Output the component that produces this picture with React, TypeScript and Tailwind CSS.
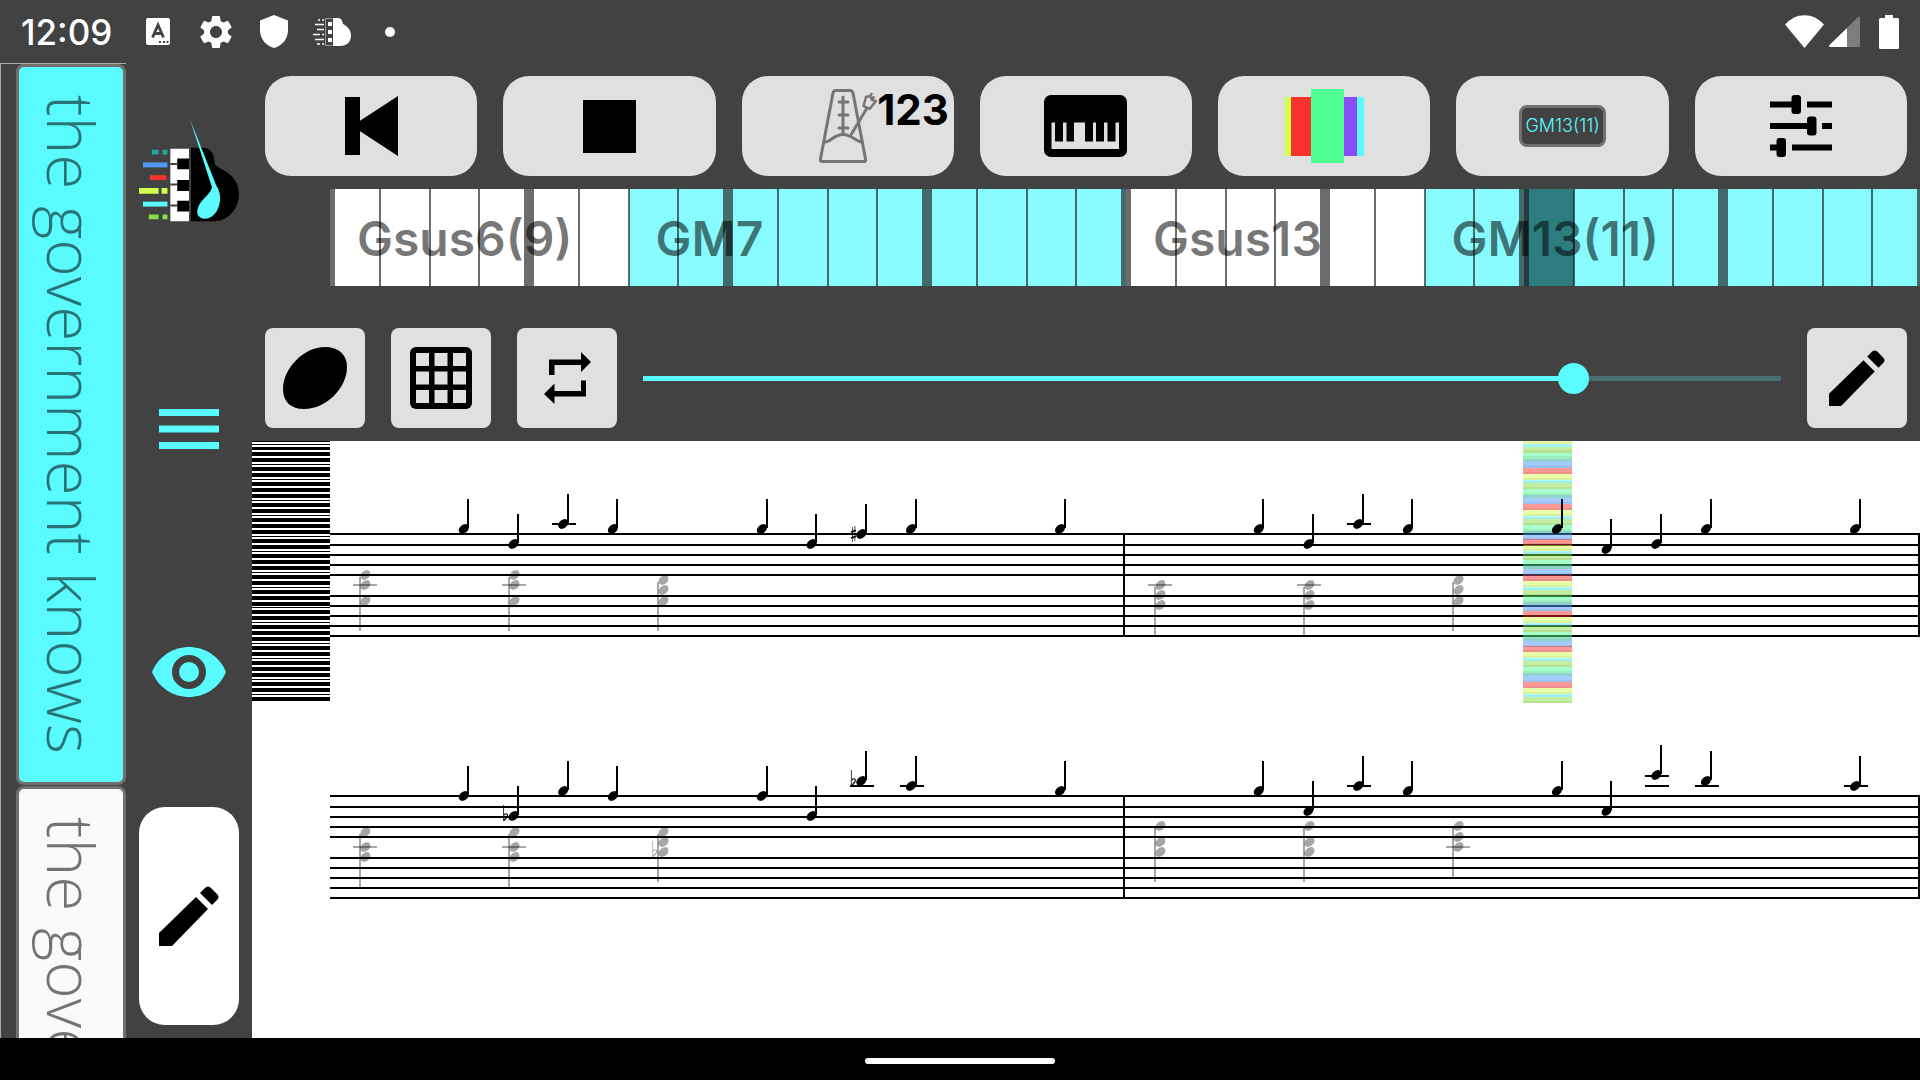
import React from "react";
import { MdSettings } from "react-icons/md";

const STEP = 795 / 16;
const noteX = (k: number) => 365 + STEP * k;

type Note = { k: number; y: number; ledgers?: number[]; accidental?: "sharp" | "flat" };
type Chord = { k: number; heads: number[]; ledger?: number; flat?: number };

const melody: Note[] = [
  { k: 2, y: 529 }, { k: 3, y: 544 }, { k: 4, y: 524, ledgers: [524] }, { k: 5, y: 529 },
  { k: 8, y: 529 }, { k: 9, y: 544 }, { k: 10, y: 534, accidental: "sharp" }, { k: 11, y: 529 }, { k: 14, y: 529 },
  { k: 18, y: 529 }, { k: 19, y: 544 }, { k: 20, y: 524, ledgers: [524] }, { k: 21, y: 529 },
  { k: 24, y: 529 }, { k: 25, y: 549 }, { k: 26, y: 544 }, { k: 27, y: 529 }, { k: 30, y: 529 },
  { k: 2, y: 796 }, { k: 3, y: 816, accidental: "flat" }, { k: 4, y: 791 }, { k: 5, y: 796 },
  { k: 8, y: 796 }, { k: 9, y: 816 }, { k: 10, y: 781, ledgers: [786], accidental: "flat" },
  { k: 11, y: 786, ledgers: [786] }, { k: 14, y: 791 },
  { k: 18, y: 791 }, { k: 19, y: 811 }, { k: 20, y: 786, ledgers: [786] }, { k: 21, y: 791 },
  { k: 24, y: 791 }, { k: 25, y: 811 }, { k: 26, y: 775, ledgers: [776, 786] },
  { k: 27, y: 781, ledgers: [786] }, { k: 30, y: 786, ledgers: [786] },
];

const harmony: Chord[] = [
  { k: 0, heads: [575, 585, 601], ledger: 585 },
  { k: 3, heads: [575, 585, 601], ledger: 585 },
  { k: 6, heads: [580, 590, 601] },
  { k: 16, heads: [585, 595, 605], ledger: 585 },
  { k: 19, heads: [585, 595, 605], ledger: 585 },
  { k: 22, heads: [580, 590, 601] },
  { k: 0, heads: [832, 847, 857], ledger: 847 },
  { k: 3, heads: [832, 847, 857], ledger: 847 },
  { k: 6, heads: [832, 842, 852], flat: 852 },
  { k: 16, heads: [826, 842, 852] },
  { k: 19, heads: [826, 842, 852] },
  { k: 22, heads: [826, 837, 847], ledger: 847 },
];

const staffLines = [534, 545, 555, 565, 575, 596, 606, 616, 626, 636];

const octaveKeys: [number, number][] = [[0, 1], [3, 4], [9, 4], [15, 1], [18, 4], [24, 4], [30, 4]];
const keyBars: [number, number][] = [
  [441, 1], [444, 1], [447, 3], [452, 4], [458, 4],
  ...[464, 500, 536, 572, 607, 643, 679].flatMap((top) =>
    octaveKeys.map(([dy, h]): [number, number] => [top + dy, h])
  ).filter(([y]) => y < 700),
];

const octaveStripes: [number, string, boolean][] = [
  [3, "#fa322d", false], [3, "#fa322d", true],
  [3, "#d0ff50", false], [3, "#d0ff50", true],
  [3, "#5afbff", true],
  [3, "#86e040", false], [3, "#86e040", true],
  [3, "#50ff94", false], [3, "#50ff94", true],
  [3, "#26a69a", false],
  [3, "#5099ff", false], [3, "#5099ff", true],
];

function Head({ x, y }: { x: number; y: number }) {
  return <ellipse cx={x} cy={y} rx={5.6} ry={4.2} transform={`rotate(-42 ${x} ${y})`} />;
}

function Flat({ x, y }: { x: number; y: number }) {
  return (
    <g fill="none" stroke="black">
      <path d={`M${x - 10.5} ${y - 11}V${y + 5}`} strokeWidth={0.8} />
      <path d={`M${x - 10} ${y - 1}C${x - 7} ${y - 4} ${x - 6} ${y - 1} ${x - 7} ${y + 1}L${x - 10} ${y + 4.5}`} strokeWidth={1.2} />
    </g>
  );
}

function Sharp({ x, y }: { x: number; y: number }) {
  return (
    <g stroke="black">
      <path d={`M${x - 9.3} ${y - 7}V${y + 8}M${x - 7} ${y - 8}V${y + 7}`} strokeWidth={0.7} />
      <path d={`M${x - 11} ${y - 2}l5 -1.6M${x - 11} ${y + 4}l5 -1.6`} strokeWidth={1.8} />
    </g>
  );
}

function Score() {
  return (
    <svg className="block w-full" viewBox="252 441 1668 597" preserveAspectRatio="xMinYMin meet" role="img" aria-label="Sheet music">
      {keyBars.map(([y, h]) => (
        <rect key={y} x={252} y={y} width={78} height={h} shapeRendering="crispEdges" />
      ))}
      {[0, 262].map((dy) => (
        <g key={dy} shapeRendering="crispEdges">
          {staffLines.map((y) => (
            <rect key={y} x={330} y={y + dy - 1} width={1590} height={2} />
          ))}
          <rect x={1123} y={533 + dy} width={2} height={104} />
          <rect x={1918} y={533 + dy} width={2} height={104} />
        </g>
      ))}
      <g shapeRendering="crispEdges">
        <g opacity={0.5}>
          <rect x={1523} y={441} width={49} height={3} fill="#d0ff50" />
          <rect x={1523} y={444} width={49} height={3} fill="#5afbff" />
          <rect x={1523} y={447} width={49} height={6} fill="#86e040" />
          <rect x={1523} y={453} width={49} height={6} fill="#50ff94" />
          <rect x={1523} y={459} width={49} height={3} fill="#26a69a" />
          <rect x={1523} y={462} width={49} height={6} fill="#5099ff" />
        </g>
        <g fill="black" opacity={0.06}>
          <rect x={1523} y={442} width={49} height={1} />
          <rect x={1523} y={445} width={49} height={1} />
          <rect x={1523} y={450} width={49} height={3} />
          <rect x={1523} y={456} width={49} height={3} />
          <rect x={1523} y={465} width={49} height={3} />
        </g>
        {[468, 504, 539, 575, 611, 646, 682].map((top) =>
          octaveStripes.map(([h, fill, dark], i) => {
            const y = top + i * 3;
            if (y >= 703) return null;
            return (
              <g key={y}>
                <rect x={1523} y={y} width={49} height={h} fill={fill} opacity={0.5} />
                {dark && <rect x={1523} y={y + 1} width={49} height={2} opacity={0.06} />}
              </g>
            );
          })
        )}
      </g>
      {melody.map((n) => {
        const x = noteX(n.k);
        return (
          <g key={`${n.k}-${n.y}`}>
            <Head x={x - 0.6} y={n.y} />
            <rect x={Math.round(x + 3)} y={n.y - 30} width={2} height={29} />
            {n.ledgers?.map((l) => (
              <rect key={l} x={Math.round(x) - 12} y={l - 1} width={24} height={2} />
            ))}
            {n.accidental === "flat" && <Flat x={x} y={n.y} />}
            {n.accidental === "sharp" && <Sharp x={x} y={n.y} />}
          </g>
        );
      })}
      {harmony.map((c) => {
        const x = noteX(c.k);
        const low = c.heads[c.heads.length - 1];
        return (
          <g key={`${c.k}-${low}-${c.heads[0]}`}>
            <g fillOpacity={0.35}>
              {c.heads.map((y) => <Head key={y} x={x + 0.4} y={y} />)}
              <rect x={Math.round(x) - 6} y={c.heads[0] + 2} width={2} height={low + 28 - c.heads[0]} />
              {c.ledger && <rect x={Math.round(x) - 12} y={c.ledger - 1} width={24} height={2} />}
            </g>
            {c.flat && <g opacity={0.35}><Flat x={x} y={c.flat} /></g>}
          </g>
        );
      })}
    </svg>
  );
}

function Pencil({ className }: { className: string }) {
  return (
    <svg className={className} viewBox="0 0 60 60">
      <path d="M0 47L37 11L49 23L13 60H0Z" />
      <path d="M41 7L46 2Q49 -1 52 2L58 8Q61 11 58 14L53 19Z" />
    </svg>
  );
}

function Logo() {
  return (
    <svg className="h-[134px] w-[102px]" viewBox="138 118 102 134">
      <path fill="#26a69a" d="M151 149h7v5h-7zM162 149h5v5h-5z" />
      <path fill="#5099ff" d="M142 162h25v5h-25z" />
      <path fill="#fa322d" d="M149 175h17v5h-17z" />
      <path fill="#d0ff50" d="M138 188h20v6h-20zM161 188h6v6h-6z" />
      <path fill="#5afbff" d="M142 202h25v5h-25z" />
      <path fill="#86e040" d="M148 215h10v5h-10zM162 215h5v5h-5z" />
      <path fill="white" d="M170 148h19v74h-19z" />
      <path d="M177 158h12v11h-12zM177 180h12v11h-12zM177 201h12v11h-12z" />
      <path stroke="#424242" strokeWidth="2" d="M170 163.5h7M170 184.500h7M170 206h7" />
      <path d="M191 147H203C211 147 215 154 215 161C215 167 223 168 229 173C237 179 240 187 240 194C240 210 228 222 215 222H191Z" />
      <path fill="#5afbff" d="M190 118L217 186C221 191 222 201 219 208C217 214 211 220 205 219.500C199 219 196 215 198 209C200 200 210 196 212.500 187.500Z" />
    </svg>
  );
}

function StatusBar() {
  return (
    <header className="flex h-[63px] shrink-0 items-center justify-between pl-[21px] pr-[21px] text-white">
      <div className="flex items-center">
        <time className="w-[91px] text-[35px] leading-[44px] font-medium">12:09</time>
        <svg className="ml-[34px] h-[27px] w-[24px]" viewBox="0 0 24 27">
          <rect width="24" height="27" rx="2" fill="white" />
          <path fill="none" stroke="#424242" strokeWidth="2.800" d="M6.500 19.500L12 7L17.500 19.500M8.500 15.500H15.500" />
          <path fill="#424242" d="M13 23h2v2h-2zM17 23h2v2h-2zM20.500 23h2v2h-2z" />
        </svg>
        <MdSettings className="ml-[26px] size-[40px]" />
        <svg className="ml-[24px] h-[33px] w-[28px]" viewBox="0 0 28 33">
          <path fill="white" d="M14 0L28 5.500V15C28 24 22 31 14 33C6 31 0 24 0 15V5.500Z" />
        </svg>
        <svg className="ml-[25px] h-[28px] w-[38px]" viewBox="0 0 38 28">
          <path fill="white" d="M20 0H25C29 0 29.500 4 30 6C34 8 38 12 38 17C38 24 34 28 27 28H20Z" />
          <path fill="white" d="M15 4h4v4h-4zM15 12h4v4h-4zM15 20h4v4h-4z" />
          <path stroke="#999" strokeWidth="1" fill="none" d="M12.500 0V28M12 .5H19M12 27.500H19" />
          <path stroke="white" strokeWidth="1.600" d="M5 2h2M9 2h2M2 6.500h9M4 11.500h7M0 16.500h7M9 16.500h2M2 21.500h9M4 26h3M9 26h2" />
        </svg>
        <span className="ml-[34px] size-[10px] rounded-full bg-white" />
      </div>
      <div className="flex items-center">
        <svg className="h-[33px] w-[39px]" viewBox="0 0 39 33">
          <path fill="white" d="M19.500 33L0 9.500C11 -3 28 -3 39 9.500Z" />
        </svg>
        <svg className="ml-[5px] h-[31px] w-[31px]" viewBox="0 0 31 31">
          <path fill="#7d7d7d" d="M18 12L29 1Q31 0 31 2V30L30 31H18Z" />
          <path fill="white" d="M18 12V31H1Q-1 30 1 28.500Z" />
        </svg>
        <svg className="ml-[19px] h-[34px] w-[20px]" viewBox="0 0 20 34">
          <path fill="white" d="M6 0H14V3H18.500Q20 3 20 4.500V32.500Q20 34 18.500 34H1.500Q0 34 0 32.500V4.500Q0 3 1.500 3H6Z" />
        </svg>
      </div>
    </header>
  );
}

function LyricCard({ active }: { active?: boolean }) {
  return (
    <li>
      <button
        className={
          "flex w-full items-center justify-center rounded-[8px] border-[3px] border-[#757070] py-[28px] " +
          (active ? "bg-[#5afbff]" : "bg-[#fafafa]")
        }
      >
        <span className="font-['Open_Sans'] text-[64px] leading-[82px] font-light whitespace-nowrap text-black/54 [writing-mode:vertical-rl]">
          the government knows
        </span>
      </button>
    </li>
  );
}

function ToolButton({ label, children }: { label: string; children: React.ReactNode }) {
  return (
    <button aria-label={label} className="relative flex h-[100px] flex-1 items-center justify-center rounded-[26px] bg-[#e0e0e0]">
      {children}
    </button>
  );
}

function SquareButton({ label, children }: { label: string; children: React.ReactNode }) {
  return (
    <button aria-label={label} className="flex size-[100px] shrink-0 items-center justify-center rounded-[8px] bg-[#e0e0e0]">
      {children}
    </button>
  );
}

function Toolbar() {
  return (
    <div className="flex gap-[26px] px-[13px] pt-[13px]">
      <ToolButton label="Rewind">
        <svg className="h-[60px] w-[53px]" viewBox="0 0 53 60">
          <path d="M0 1h15v58h-15zM7 30L53 0V60Z" />
        </svg>
      </ToolButton>
      <ToolButton label="Stop">
        <span className="h-[53px] w-[53px] bg-black" />
      </ToolButton>
      <ToolButton label="Metronome, 123 beats per minute">
        <svg className="h-[76px] w-[60px]" viewBox="819 88 60 76" fill="none" stroke="#757575" strokeWidth="3" strokeLinejoin="round" strokeLinecap="round">
          <path d="M837 90.500H851Q853 90.500 854 93L866.500 159Q867 161.500 865 161.500H823Q821 161.500 821.500 159L834 93Q834.500 90.500 837 90.500Z" />
          <path d="M844 97V134M840 102H849M840 115H849M840 128H849" />
          <path d="M826 142C832 142 835 134.500 844 134.500C853 134.500 857 142 863 142M852.500 134L868 108" />
          <path strokeWidth="2.500" d="M864.500 106L867 97L871 96L873 100L877 101L870.500 109ZM871 96L872.500 94M873 100L874.500 97" />
        </svg>
        <span className="absolute top-[8px] right-[5px] text-[42px] leading-[52px] font-bold">123</span>
      </ToolButton>
      <ToolButton label="Piano">
        <svg className="h-[62px] w-[83px]" viewBox="0 0 83 62">
          <rect width="83" height="62" rx="7" />
          <path fill="#e0e0e0" d="M7.500 27.500H11V46.500H19V27.500H22.500V46.500H30V27.500H41V46.500H49V27.500H52V46.500H60V27.500H63.500V46.500H71.500V27.500H75V54H7.500Z" />
        </svg>
      </ToolButton>
      <ToolButton label="Colors">
        <span className="flex items-center">
          <span className="h-[59px] w-[6px] bg-[#d0ff50]" />
          <span className="h-[59px] w-[20px] bg-[#fa322d]" />
          <span className="h-[74px] w-[33px] bg-[#50ff94]" />
          <span className="h-[59px] w-[13px] bg-[#8a4cf6]" />
          <span className="h-[59px] w-[7px] bg-[#5afbff]" />
        </span>
      </ToolButton>
      <ToolButton label="Current chord">
        <span className="flex h-[42px] w-[87px] items-center justify-center rounded-[8px] border-[3px] border-[#757070] bg-[#424242] text-[18px] leading-[24px] font-light text-[#5afbff]">
          GM13(11)
        </span>
      </ToolButton>
      <ToolButton label="Mixer">
        <svg className="size-[62px]" viewBox="0 0 62 62">
          <path d="M0 6.500h26v6h-26zM37 6.500h25v6h-25zM0 28h41v6h-41zM52 28h10v6h-10zM0 49.500h10v6h-10zM22 49.500h40v6h-40z" />
          <rect x="21.500" width="9.500" height="19" rx="3" />
          <rect x="37" y="21.500" width="9.500" height="19" rx="3" />
          <rect x="6.500" y="43" width="9.500" height="19" rx="3" />
        </svg>
      </ToolButton>
    </div>
  );
}

const segments = [
  { name: "Gsus6(9)", start: 0, count: 6, major: false },
  { name: "GM7", start: 6, count: 10, major: true },
  { name: "Gsus13", start: 16, count: 6, major: false },
  { name: "GM13(11)", start: 22, count: 10, major: true },
];

function ChordStrip() {
  return (
    <div className="mt-[13px] -mr-[2px] ml-[78px] flex h-[97px]">
      {segments.map((s) => (
        <div key={s.start} className={"grid min-w-0 basis-0 grid-cols-1 grid-rows-1 " + (s.major ? "grow-[10]" : "grow-[6]")}>
          <div className="col-start-1 row-start-1 grid auto-cols-fr grid-flow-col">
            {Array.from({ length: s.count }, (_, i) => {
              const k = s.start + i;
              const current = k === 24;
              return (
                <div
                  key={k}
                  className={[
                    k % 4 === 0 ? "border-l-[5px]" : "border-l",
                    k % 4 === 3 ? "border-r-[5px]" : "border-r",
                    current
                      ? "border-[#243c3c] bg-[#2c7c80]"
                      : s.major
                        ? "border-[#446b6b] bg-[#87fbff]"
                        : "border-[#6c6c6c] bg-white",
                  ].join(" ")}
                />
              );
            })}
          </div>
          <span className="col-start-1 row-start-1 self-center pt-[3px] pl-[27px] text-[48px] leading-[60px] font-semibold whitespace-nowrap text-black/54">
            {s.name}
          </span>
        </div>
      ))}
    </div>
  );
}

function Controls() {
  return (
    <div className="mt-[42px] flex items-center gap-[26px] px-[13px]">
      <SquareButton label="Note">
        <svg className="h-[62px] w-[64px]" viewBox="0 0 64 62">
          <path d="M42 0C56 0 64 8 64 20C64 41 43 62 21 62C8 62 0 55 0 42C0 21 21 0 42 0Z" />
        </svg>
      </SquareButton>
      <SquareButton label="Grid">
        <svg className="size-[62px]" viewBox="0 0 62 62">
          <rect width="62" height="62" rx="6" />
          <path fill="#e0e0e0" d="M6 6h13v13h-13zM24.500 6h13v13h-13zM43 6h13v13h-13zM6 24.500h13v13h-13zM24.500 24.500h13v13h-13zM43 24.500h13v13h-13zM6 43h13v13h-13zM24.500 43h13v13h-13zM43 43h13v13h-13z" />
        </svg>
      </SquareButton>
      <SquareButton label="Loop">
        <svg className="h-[52px] w-[47px]" viewBox="0 0 47 52">
          <path d="M5 23V7.500H37V0L47 10L37 20V13H10.500V23ZM42 28.500V44.500H10.500V52L0 42L10.500 31.500V39H37V28.500Z" />
        </svg>
      </SquareButton>
      <input
        type="range"
        aria-label="Position"
        min={0}
        max={1000}
        defaultValue={827}
        className="h-[31px] min-w-0 flex-1 appearance-none bg-transparent [&::-webkit-slider-runnable-track]:h-[5px] [&::-webkit-slider-runnable-track]:bg-[linear-gradient(to_right,#5afbff_82%,#487070_82%)] [&::-webkit-slider-thumb]:mt-[-13px] [&::-webkit-slider-thumb]:size-[31px] [&::-webkit-slider-thumb]:appearance-none [&::-webkit-slider-thumb]:rounded-full [&::-webkit-slider-thumb]:bg-[#5afbff]"
      />
      <SquareButton label="Edit score">
        <Pencil className="size-[56px]" />
      </SquareButton>
    </div>
  );
}

export default function App() {
  return (
    <div className="flex h-screen flex-col overflow-hidden bg-[#424242] font-['Inter',sans-serif] text-black">
      <StatusBar />
      <div className="flex min-h-0 flex-1">
        <ul className="flex w-[126px] shrink-0 flex-col gap-[1px] overflow-hidden border-t border-l border-[#aaaaaa] pl-[15px]">
          <LyricCard active />
          <LyricCard />
        </ul>
        <nav className="flex w-[126px] shrink-0 flex-col gap-[26px] p-[13px]">
          <button aria-label="Home" className="flex flex-1 items-center justify-center">
            <Logo />
          </button>
          <button aria-label="Menu" className="flex flex-1 items-center justify-center">
            <svg className="h-[40px] w-[60px]" viewBox="0 0 60 40">
              <path fill="#5afbff" d="M0 0h60v7h-60zM0 16.500h60v7h-60zM0 33h60v7h-60z" />
            </svg>
          </button>
          <button aria-label="View" className="flex flex-1 items-center justify-center">
            <svg className="h-[50px] w-[74px]" viewBox="0 0 74 50">
              <path fill="#5afbff" d="M0 25C14 -8.300 60 -8.300 74 25C60 58.300 14 58.300 0 25Z" />
              <circle cx="37" cy="25" r="13.500" fill="none" stroke="#424242" strokeWidth="7" />
            </svg>
          </button>
          <button aria-label="Edit" className="flex flex-1 items-center justify-center rounded-[26px] bg-white">
            <Pencil className="size-[60px]" />
          </button>
        </nav>
        <main className="flex min-w-0 flex-1 flex-col overflow-hidden">
          <Toolbar />
          <ChordStrip />
          <Controls />
          <section className="mt-[13px] min-h-0 flex-1 overflow-hidden bg-white">
            <Score />
          </section>
        </main>
      </div>
      <footer className="flex h-[42px] shrink-0 items-center justify-center bg-black pt-[4px]">
        <span className="h-[6px] w-[190px] rounded-full bg-white" />
      </footer>
    </div>
  );
}
